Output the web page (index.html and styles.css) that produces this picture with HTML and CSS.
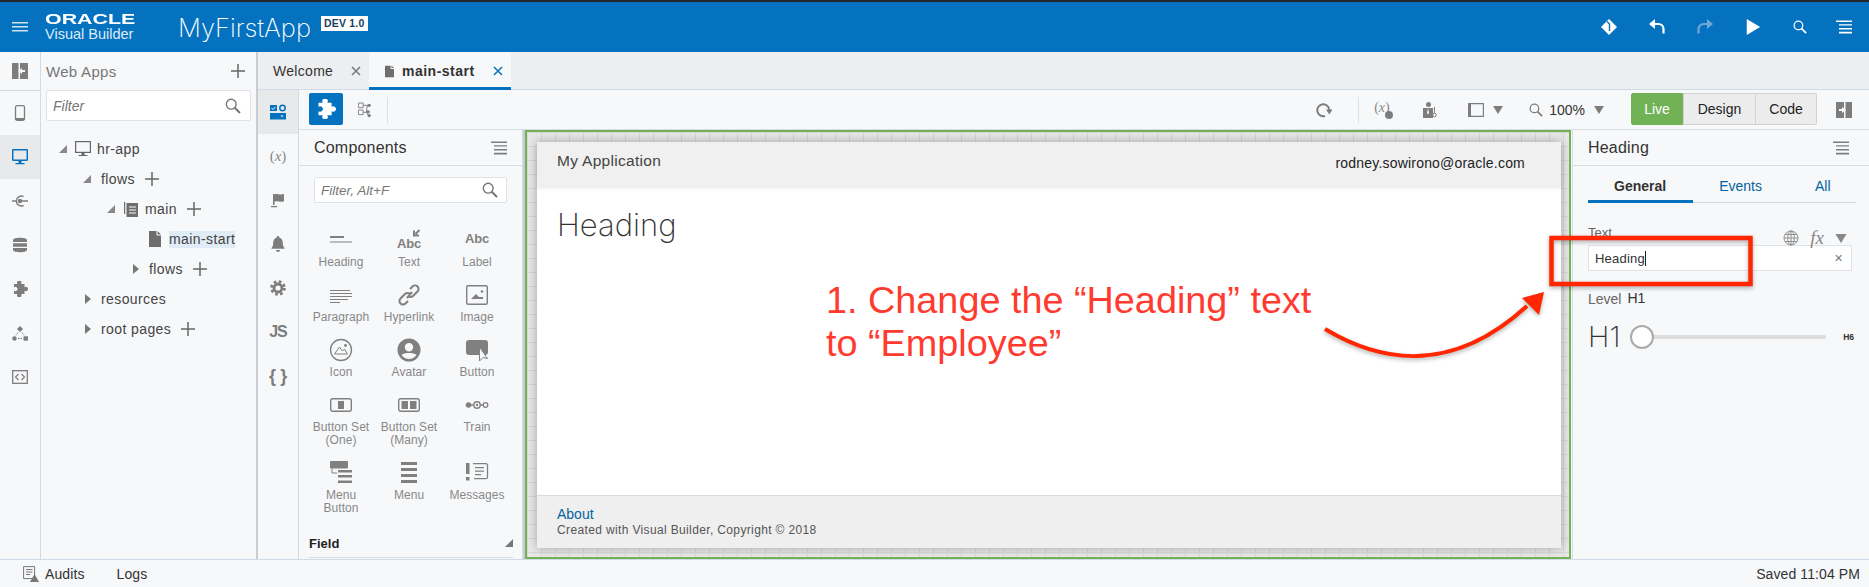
FILE: index.html
```html
<!DOCTYPE html>
<html lang="en">
<head>
    <meta charset="UTF-8">
    <title>MyFirstApp - Visual Builder</title>
    <link rel="stylesheet" href="styles.css">
</head>
<body>
<svg class="defs" width="0" height="0">
    <symbol id="plus" viewBox="0 0 14 14"><path d="M7 0v14M0 7h14" fill="none" stroke="currentColor" stroke-width="1.5"/></symbol>
    <symbol id="search" viewBox="0 0 16 16"><circle cx="6.2" cy="6.2" r="4.9" fill="none" stroke="currentColor" stroke-width="1.4"/><path d="M9.8 9.8l5.2 5.2" stroke="currentColor" stroke-width="2"/></symbol>
    <symbol id="lines" viewBox="0 0 16 14"><path d="M0 .5h16v1.4H0zM3 4.2h13v1.4H3zM3 8h13v1.4H3zM3 11.8h13v1.6H3z" fill="currentColor"/></symbol>
    <symbol id="puzzle" viewBox="0 0 16 16"><path d="M2 3h3.500a2.200 2.200 0 1 1 3.500 0h3.500v3.200a2.200 2.200 0 1 1 0 3.600V13H9a2.200 2.200 0 1 1-3.500 0H2V9.800a2.200 2.200 0 1 0 0-3.600z" fill="currentColor"/></symbol>
    <symbol id="file" viewBox="0 0 12 16"><path d="M0 0h7.5v4.5H12V16H0zM8.6 0L12 3.4H8.6z" fill="currentColor"/></symbol>
    <symbol id="down" viewBox="0 0 10 8"><path d="M0 0h10L5 8z" fill="currentColor"/></symbol>
</svg>

<header class="topbar">
    <svg class="hamburger" viewBox="0 0 16 10"><path d="M0 0h16v1.5H0zM0 4h16v1.5H0zM0 8h16v1.5H0z" fill="currentColor"/></svg>
    <div class="brand">
        <div class="brand-oracle">ORACLE</div>
        <div class="brand-product">Visual Builder</div>
    </div>
    <div class="app-name">MyFirstApp</div>
    <div class="app-badge">DEV 1.0</div>
    <div class="top-actions">
        <svg viewBox="0 0 16 16"><path d="M8 0l8 8-8 8-8-8z" fill="currentColor"/><path d="M6 2.5l2.5 2.5v7" fill="none" stroke="#0572c0" stroke-width="1.4"/></svg>
        <svg viewBox="0 0 16 16"><path d="M0 5l6-5v10z" fill="currentColor"/><path d="M5 5h4.500a5 5 0 0 1 5 5v4.500" fill="none" stroke="currentColor" stroke-width="2.200"/></svg>
        <svg class="dim" viewBox="0 0 16 16"><path d="M16 5l-6-5v10z" fill="currentColor"/><path d="M11 5H6.500a5 5 0 0 0-5 5v4.500" fill="none" stroke="currentColor" stroke-width="2.200"/></svg>
        <svg viewBox="0 0 16 18"><path d="M1 0l15 9-15 9z" fill="currentColor"/></svg>
        <svg class="small" viewBox="0 0 16 16"><use href="#search"/></svg>
        <svg viewBox="0 0 16 14"><use href="#lines"/></svg>
    </div>
</header>

<main class="workspace">
    <nav class="rail">
        <div class="rail-top">
            <svg viewBox="0 0 16 16"><path d="M0 0h6.500v16H0zM8 0h8v16H8z" fill="currentColor"/><path d="M6 8l4-3v2h3v2h-3v2z" fill="#f7f8fa"/></svg>
        </div>
        <div class="rail-item"><svg viewBox="0 0 16 16"><rect x="3.500" y=".7" width="9" height="14.600" rx="1.500" fill="none" stroke="currentColor" stroke-width="1.300"/><path d="M3.500 13h9v2h-9z" fill="currentColor"/></svg></div>
        <div class="rail-item active"><svg viewBox="0 0 16 16"><rect x=".7" y=".7" width="14.600" height="10.600" rx=".8" fill="none" stroke="currentColor" stroke-width="1.500"/><path d="M6.500 11.500h3V14h-3zM3.500 14h9v1.300h-9z" fill="currentColor"/></svg></div>
        <div class="rail-item"><svg viewBox="0 0 16 16"><path d="M11.500 3.500a5 5 0 1 0 0 9M0 8h5M8 8h8" fill="none" stroke="currentColor" stroke-width="1.500"/><circle cx="8" cy="8" r="2.200" fill="currentColor"/></svg></div>
        <div class="rail-item"><svg viewBox="0 0 16 16"><path d="M1 3c0-3 14-3 14 0v2H1zM1 6.200h14v3.600H1zM1 11h14v2c0 3-14 3-14 0z" fill="currentColor"/></svg></div>
        <div class="rail-item"><svg viewBox="0 0 16 16"><use href="#puzzle"/></svg></div>
        <div class="rail-item"><svg viewBox="0 0 16 16"><path d="M8 1l3 3-3 3-3-3z" fill="currentColor"/><circle cx="2.500" cy="13.500" r="2.200" fill="currentColor"/><rect x="11.500" y="11.300" width="4.500" height="4.500" rx="1" fill="currentColor"/><path d="M6 7.500l-2 3M10 7.500l2 3M6 13.500h4" stroke="currentColor" stroke-dasharray="1.500 1.200"/></svg></div>
        <div class="rail-item"><svg viewBox="0 0 16 16"><rect x=".7" y="1.700" width="14.600" height="12.600" fill="none" stroke="currentColor" stroke-width="1.300"/><path d="M6.500 5L3.500 8l3 3M9.500 5l3 3-3 3" fill="none" stroke="currentColor" stroke-width="1.200"/></svg></div>
    </nav>

    <aside class="apps">
        <div class="apps-head">
            <span>Web Apps</span>
            <svg class="plus" viewBox="0 0 14 14"><use href="#plus"/></svg>
        </div>
        <div class="filter apps-filter">
            <span>Filter</span>
            <svg viewBox="0 0 16 16"><use href="#search"/></svg>
        </div>
        <div class="tree">
            <div class="row l-app">
                <i class="open"></i>
                <svg class="t-desktop" viewBox="0 0 16 16"><rect x=".6" y=".6" width="14.800" height="10.800" fill="none" stroke="currentColor" stroke-width="1.200"/><path d="M6.500 11.500h3V14h-3zM3.500 14h9v1h-9z" fill="currentColor"/></svg>
                <span class="t-app">hr-app</span>
            </div>
            <div class="row l-flows">
                <i class="open"></i><span class="t-gap">flows</span>
                <svg class="plus" viewBox="0 0 14 14"><use href="#plus"/></svg>
            </div>
            <div class="row l-main">
                <i class="open"></i>
                <svg class="t-pages" viewBox="0 0 14 15"><path d="M.6 0v12" stroke="currentColor" stroke-width="1.200"/><path d="M2.500 1h11.500v14H2.500z" fill="currentColor"/><path d="M5 5h7M5 8h7M5 11h7" stroke="#f7f8fa"/></svg>
                <span class="t-main">main</span>
                <svg class="plus" viewBox="0 0 14 14"><use href="#plus"/></svg>
            </div>
            <div class="row l-page">
                <svg class="t-file" viewBox="0 0 12 16"><use href="#file"/></svg>
                <span class="selected">main-start</span>
            </div>
            <div class="row l-subflows">
                <i class="shut"></i><span class="t-gap">flows</span>
                <svg class="plus" viewBox="0 0 14 14"><use href="#plus"/></svg>
            </div>
            <div class="row l-root">
                <i class="shut"></i><span class="t-gap">resources</span>
            </div>
            <div class="row l-root">
                <i class="shut"></i><span class="t-gap">root pages</span>
                <svg class="plus" viewBox="0 0 14 14"><use href="#plus"/></svg>
            </div>
        </div>
    </aside>

    <div class="splitter"></div>

    <section class="editor">
        <div class="tabs">
            <div class="tab">
                <span>Welcome</span>
                <svg viewBox="0 0 10 10"><path d="M1 1l8 8M9 1l-8 8" stroke="currentColor" stroke-width="1.500"/></svg>
            </div>
            <div class="tab current">
                <svg class="tab-file" viewBox="0 0 12 16"><use href="#file"/></svg>
                <span>main-start</span>
                <svg viewBox="0 0 10 10"><path d="M1 1l8 8M9 1l-8 8" stroke="currentColor" stroke-width="1.500"/></svg>
            </div>
        </div>
        <div class="editor-body">
            <nav class="rail-two">
                <div class="rail-two-item active">
                    <svg viewBox="0 0 16 16"><path d="M0 1h7v6H0z" fill="currentColor"/><path d="M1.500 4l1.500 1.500L5.500 3" fill="none" stroke="#fff" stroke-width="1"/><circle cx="12.500" cy="4" r="2.700" fill="none" stroke="currentColor" stroke-width="1.500"/><path d="M0 9h16v6.500H0z" fill="currentColor"/><path d="M10.500 11.500h3L12 13.300z" fill="#fff"/></svg>
                </div>
                <div class="rail-two-item"><span class="vars">(<em>x</em>)</span></div>
                <div class="rail-two-item"><svg viewBox="0 0 16 16"><path d="M3 2h1.500v11H3zM1 14h6v1.300H1zM4.500 2.500c3-1.500 4.500 1 8.500-.5l1 .2v7c-4 1.500-6-.8-9.500.5z" fill="currentColor"/></svg></div>
                <div class="rail-two-item"><svg viewBox="0 0 16 16"><path d="M8 0a1.200 1.200 0 0 1 1.200 1.400C11.500 2 12.800 4 12.800 7c0 2.500.6 3.800 1.700 5v.8H1.500V12c1.100-1.200 1.700-2.500 1.700-5 0-3 1.300-5 3.600-5.600A1.200 1.200 0 0 1 8 0zM6 14h4a2 2 0 0 1-4 0z" fill="currentColor"/></svg></div>
                <div class="rail-two-item"><svg viewBox="0 0 16 16"><circle cx="8" cy="8" r="4" fill="none" stroke="currentColor" stroke-width="2.800"/><circle cx="8" cy="8" r="6.500" fill="none" stroke="currentColor" stroke-width="2.600" stroke-dasharray="2.700 2.400"/></svg></div>
                <div class="rail-two-item"><span class="js">JS</span></div>
                <div class="rail-two-item"><span class="braces">{ }</span></div>
            </nav>
            <div class="editor-main">
                <div class="toolbar">
                    <div class="tool-blue"><svg viewBox="0 0 16 16"><use href="#puzzle"/></svg></div>
                    <svg class="tool-flow" viewBox="0 0 14 16"><path d="M.5.500h5v5h-5zM.5 8h5v5h-5z" fill="none" stroke="currentColor"/><path d="M5.500 3H12M5.500 10.500H9l1-7M9 10.500l2 3" fill="none" stroke="currentColor"/><circle cx="12" cy="3" r="1.800" fill="currentColor"/><circle cx="11" cy="10" r="1.800" fill="currentColor"/><circle cx="12" cy="14" r="1.800" fill="currentColor"/></svg>
                    <div class="tool-sep"></div>
                    <svg class="t-refresh" viewBox="0 0 16 16"><path d="M9 14A6 6 0 1 1 13.300 8" fill="none" stroke="currentColor" stroke-width="2"/><path d="M10 7.500h6.500L13.300 12.500z" fill="currentColor"/></svg>
                    <div class="tool-sep t-sep"></div>
                    <div class="t-vars"><span class="vars small">(<em>x</em>)</span><i></i></div>
                    <svg class="t-person" viewBox="0 0 14 16"><circle cx="5.500" cy="2.500" r="2.500" fill="currentColor"/><path d="M0 6h10v10H0z" fill="currentColor"/><path d="M5 6l1 5-1 1.500L4 11z" fill="#f7f8fa"/><circle cx="11.500" cy="13" r="1.800" fill="#f7f8fa" stroke="currentColor"/><path d="M11.500 5v6" stroke="currentColor"/></svg>
                    <svg class="t-frame" viewBox="0 0 16 14"><path d="M.6.600h14.800v12.800H.6z" fill="none" stroke="currentColor" stroke-width="1.200"/><path d="M0 0h3v14H0z" fill="currentColor"/></svg>
                    <svg class="t-down" viewBox="0 0 10 8"><use href="#down"/></svg>
                    <svg class="t-zoom" viewBox="0 0 16 16"><use href="#search"/></svg>
                    <span class="t-percent">100%</span>
                    <svg class="t-down" viewBox="0 0 10 8"><use href="#down"/></svg>
                    <div class="modes">
                        <div class="mode live">Live</div>
                        <div class="mode design">Design</div>
                        <div class="mode code">Code</div>
                    </div>
                    <svg class="t-panel" viewBox="0 0 16 16"><path d="M9.500 0H16v16H9.500zM0 0h8v16H0z" fill="currentColor"/><path d="M10 8L6 5v2H3v2h3v2z" fill="#f7f8fa"/></svg>
                </div>
                <div class="editor-panes">
                    <aside class="components">
                        <div class="pane-head">
                            <span>Components</span>
                            <svg viewBox="0 0 16 14"><use href="#lines"/></svg>
                        </div>
                        <div class="filter comp-filter">
                            <span>Filter, Alt+F</span>
                            <svg viewBox="0 0 16 16"><use href="#search"/></svg>
                        </div>
                        <div class="palette">
                            <div class="comp">
                                <svg viewBox="0 0 24 24"><path d="M1 8h14v2H1zM1 13.500h22v1H1z"/></svg>
                                <div>Heading</div>
                            </div>
                            <div class="comp">
                                <svg viewBox="0 0 24 24"><text class="abc" x="0" y="20">Abc</text><path d="M22.500 2l-4 4M17 2.500V7.500h5" fill="none" stroke="currentColor" stroke-width="2"/></svg>
                                <div>Text</div>
                            </div>
                            <div class="comp">
                                <svg viewBox="0 0 24 24"><text class="abc" x="0" y="15">Abc</text></svg>
                                <div>Label</div>
                            </div>
                            <div class="comp">
                                <svg viewBox="0 0 24 24"><path d="M1 7h20v1H1zM1 10h22v1H1zM1 13h22v1H1zM1 16h18v1H1zM1 19h10v1H1z"/></svg>
                                <div>Paragraph</div>
                            </div>
                            <div class="comp">
                                <svg viewBox="0 0 24 24"><path d="M10 15l5-6M13 6l2.500-2.500a3.500 3.500 0 0 1 5 5L16 13a3.500 3.500 0 0 1-5 0M11 18l-2.500 2.500a3.500 3.500 0 0 1-5-5L8 11a3.500 3.500 0 0 1 5 0" fill="none" stroke="currentColor" stroke-width="2"/></svg>
                                <div>Hyperlink</div>
                            </div>
                            <div class="comp">
                                <svg viewBox="0 0 24 24"><rect x="1.700" y="2.700" width="20.600" height="18.600" rx="1.500" fill="none" stroke="currentColor" stroke-width="1.400"/><path d="M6 16l5-5 3 3H18v2z"/><circle cx="17" cy="8.500" r="1.300"/></svg>
                                <div>Image</div>
                            </div>
                            <div class="comp">
                                <svg viewBox="0 0 24 24"><circle cx="12" cy="12" r="10.500" fill="none" stroke="currentColor" stroke-width="1.300"/><path d="M5.500 16l5-7 3 4 2-2 3 5z" fill="none" stroke="currentColor"/><circle cx="16.500" cy="7.500" r="1.400"/></svg>
                                <div>Icon</div>
                            </div>
                            <div class="comp">
                                <svg viewBox="0 0 24 24"><path fill-rule="evenodd" d="M12 .5a11.500 11.500 0 1 1 0 23 11.500 11.500 0 0 1 0-23zM12 5a4.200 4.200 0 1 0 0 8.400A4.200 4.200 0 0 0 12 5zM4.500 17c2 2.800 4.500 4 7.500 4s5.500-1.200 7.500-4c-1.500-1.500-4.500-2-7.500-2s-6 .5-7.500 2z"/></svg>
                                <div>Avatar</div>
                            </div>
                            <div class="comp">
                                <svg viewBox="0 0 24 24"><rect x="1" y="2" width="22" height="15" rx="3"/><path d="M14.500 9v14l3.500-3.500 4.500 1-8-11.500z" fill="#f7f8fa" stroke="currentColor"/></svg>
                                <div>Button</div>
                            </div>
                            <div class="comp">
                                <svg viewBox="0 0 24 24"><rect x="1.700" y="5.700" width="20.600" height="12.600" rx="2" fill="none" stroke="currentColor" stroke-width="1.400"/><path d="M9 8h6v8H9z"/></svg>
                                <div>Button Set<br>(One)</div>
                            </div>
                            <div class="comp">
                                <svg viewBox="0 0 24 24"><rect x="1.700" y="5.700" width="20.600" height="12.600" rx="2" fill="none" stroke="currentColor" stroke-width="1.400"/><path d="M4.500 8h6.500v8H4.500zM13 8h6.500v8H13z"/></svg>
                                <div>Button Set<br>(Many)</div>
                            </div>
                            <div class="comp">
                                <svg viewBox="0 0 24 24"><circle cx="3.500" cy="12" r="2.800"/><circle cx="12" cy="12" r="3.200" fill="none" stroke="currentColor" stroke-width="1.400"/><circle cx="12" cy="12" r="1.200"/><circle cx="20.500" cy="12" r="2.300" fill="none" stroke="currentColor" stroke-width="1.300"/><path d="M6 12h2.500M15 12h3" stroke="currentColor" stroke-width="1.300"/></svg>
                                <div>Train</div>
                            </div>
                            <div class="comp">
                                <svg viewBox="0 0 24 24"><rect x="1" y="0" width="18" height="7.500" rx="1"/><path d="M3 7.500v4.500h5" fill="none" stroke="currentColor"/><path d="M9 9h14v2.500H9zM9 14h14v2.500H9zM9 19.500h14V22H9z"/></svg>
                                <div>Menu<br>Button</div>
                            </div>
                            <div class="comp">
                                <svg viewBox="0 0 24 24"><path d="M4 1h16v3H4zM4 7h16v3H4zM4 13h16v3H4zM4 19h16v3H4z"/></svg>
                                <div>Menu</div>
                            </div>
                            <div class="comp">
                                <svg viewBox="0 0 24 24"><path d="M1 2h3.500v11H1zM1 16h3.500v3.500H1z"/><path d="M8 2.700h13a1.500 1.500 0 0 1 1.500 1.500v12a1.500 1.500 0 0 1-1.500 1.500H9" fill="none" stroke="currentColor" stroke-width="1.300"/><path d="M10 6h9v1.300h-9zM10 9.500h9v1.300h-9zM10 13h6v1.300h-6z"/></svg>
                                <div>Messages</div>
                            </div>
                        </div>
                        <div class="field-head">
                            <span>Field</span>
                            <i></i>
                        </div>
                    </aside>
                    <div class="splitter thin"></div>
                    <div class="canvas">
                        <div class="page">
                            <div class="page-head">
                                <span class="page-title">My Application</span>
                                <span class="page-user">rodney.sowirono@oracle.com</span>
                            </div>
                            <div class="page-body">
                                <h1>Heading</h1>
                            </div>
                            <div class="page-foot">
                                <a>About</a>
                                <p>Created with Visual Builder, Copyright © 2018</p>
                            </div>
                        </div>
                    </div>
                    <aside class="props">
                        <div class="pane-head props-head">
                            <span>Heading</span>
                            <svg viewBox="0 0 16 14"><use href="#lines"/></svg>
                        </div>
                        <div class="props-tabs">
                            <span class="on">General</span>
                            <span>Events</span>
                            <span>All</span>
                        </div>
                        <div class="prop-label">
                            <span>Text</span>
                            <div class="prop-tools">
                                <svg viewBox="0 0 16 16"><g fill="none" stroke="currentColor" stroke-width=".9"><circle cx="8" cy="8" r="7"/><ellipse cx="8" cy="8" rx="3.300" ry="7"/><path d="M8 1v14M1 8h14M2 4.500h12M2 11.500h12"/></g></svg>
                                <em>fx</em>
                                <svg class="prop-down" viewBox="0 0 10 8"><use href="#down"/></svg>
                            </div>
                        </div>
                        <div class="prop-input">
                            <span class="value">Heading</span>
                            <span class="clear">×</span>
                        </div>
                        <div class="prop-level">
                            <span>Level</span><b>H1</b>
                        </div>
                        <div class="slider">
                            <span class="slider-big">H1</span>
                            <div class="slider-track"><i></i></div>
                            <span class="slider-end">H6</span>
                        </div>
                    </aside>
                </div>
            </div>
        </div>
    </section>
</main>

<footer class="statusbar">
    <svg viewBox="0 0 16 16"><path d="M.6.600h11v12H.6z" fill="none" stroke="currentColor"/><path d="M3 3.500h6.500M3 6h6.500M3 8.500h4" stroke="currentColor"/><path d="M11.500 8l4.500 8H7z" fill="currentColor"/></svg>
    <span class="audits">Audits</span>
    <span class="logs">Logs</span>
    <span class="saved">Saved 11:04 PM</span>
</footer>

<!-- callout drawn on top of the screenshot -->
<div class="callout">1. Change the “Heading” text<br>to “Employee”</div>
<svg class="markup" viewBox="0 0 1869 587">
    <rect x="1551.500" y="238" width="199" height="46" fill="none" stroke="#ff2600" stroke-width="4.500"/>
    <path d="M1325 329C1385 365 1455 372 1527 306" fill="none" stroke="#ff2600" stroke-width="4"/>
    <path d="M1544 292L1522 298 1539 315z" fill="#ff2600"/>
</svg>
</body>
</html>
```

FILE: styles.css
```css
body {
    margin: 0;
    width: 1869px;
    height: 587px;
    overflow: hidden;
    position: relative;
    display: flex;
    flex-direction: column;
    font-family: "Liberation Sans", Arial, sans-serif;
    background: #f7f8fa;
    color: #333;
}

.defs {
    position: absolute;
}

svg {
    display: block;
    flex: none;
}

/* top bar */
.topbar {
    height: 50px;
    border-top: 2px solid #23262b;
    background: #0572c0;
    color: #fff;
    display: flex;
    align-items: center;
    flex: none;
}

.hamburger {
    width: 16px;
    height: 10px;
    margin-left: 12px;
    color: #cfe3f3;
}

.brand {
    margin-left: 17px;
    width: 133px;
}

.brand-oracle {
    font-size: 15.500px;
    font-weight: bold;
    line-height: 14px;
    transform: scaleX(1.38);
    transform-origin: left;
}

.brand-product {
    font-size: 14.500px;
    line-height: 17px;
    color: #dcebf7;
}

.app-name {
    font-family: Inter, sans-serif;
    font-weight: 200;
    font-size: 25.500px;
}

.app-badge {
    margin: 0 0 8px 10px;
    background: #fff;
    color: #1d3f5e;
    font-size: 10.500px;
    font-weight: bold;
    letter-spacing: .2px;
    padding: 1px 3px;
    line-height: 13px;
}

.top-actions {
    margin-left: auto;
    display: flex;
    align-items: center;
    gap: 32px;
    padding-right: 17px;
}

.top-actions svg {
    width: 16px;
    height: 16px;
}

.top-actions .dim {
    color: #6fa9d6;
}

.top-actions .small {
    width: 14px;
    height: 14px;
    margin-right: -3px;
}

/* left rail */
.workspace {
    flex: 1;
    display: flex;
    min-height: 0;
}

.rail {
    width: 40px;
    border-right: 1px solid #cfdbe6;
    flex: none;
    color: #7d7d7d;
}

.rail-top {
    height: 38px;
    border-bottom: 1px solid #cfdbe6;
    display: flex;
    align-items: center;
    justify-content: center;
}

.rail-item {
    height: 44px;
    display: flex;
    align-items: center;
    justify-content: center;
}

.rail-top svg, .rail-item svg {
    width: 16px;
    height: 16px;
}

.rail-item.active {
    background: #e8e9eb;
    color: #0572c0;
}

/* web apps panel */
.apps {
    width: 215px;
    flex: none;
}

.apps-head {
    height: 38px;
    display: flex;
    align-items: center;
    justify-content: space-between;
    padding: 0 11px 0 5px;
    font-size: 15px;
    letter-spacing: .3px;
    color: #777;
}

.plus {
    width: 14px;
    height: 14px;
    color: #666;
}

.filter {
    display: flex;
    align-items: center;
    justify-content: space-between;
    background: #fff;
    border: 1px solid #dfe3e8;
    border-radius: 2px;
    font-size: 14px;
    font-style: italic;
    color: #777;
    padding: 0 9px 0 6px;
    box-sizing: border-box;
}

.filter svg {
    width: 16px;
    height: 16px;
    color: #777;
}

.apps-filter {
    margin-left: 5px;
    width: 205px;
    height: 31px;
}

.tree {
    margin-top: 13px;
    font-size: 14px;
    letter-spacing: .4px;
    color: #444;
}

.row {
    height: 30px;
    display: flex;
    align-items: center;
}

.row .plus {
    margin-left: 10px;
}

.open {
    width: 0;
    height: 0;
    border-style: solid;
    border-width: 0 0 8px 8px;
    border-color: transparent transparent #888;
}

.shut {
    width: 0;
    height: 0;
    border-style: solid;
    border-width: 5.500px 0 5.500px 6px;
    border-color: transparent transparent transparent #777;
}

.l-app { padding-left: 18px; }
.l-flows { padding-left: 42px; }
.l-main { padding-left: 66px; }
.l-page { padding-left: 108px; }
.l-subflows { padding-left: 92px; }
.l-root { padding-left: 44px; }

.t-gap { margin-left: 10px; }
.t-app { margin-left: 6px; }
.t-main { margin-left: 7px; }

.t-desktop {
    width: 16px;
    height: 16px;
    margin-left: 8px;
    color: #666;
}

.t-pages {
    width: 14px;
    height: 15px;
    margin-left: 9px;
    color: #6e6e6e;
}

.t-file {
    width: 12px;
    height: 16px;
    color: #6e6e6e;
}

.selected {
    margin-left: 8px;
    background: #dfebf5;
    line-height: 17px;
}

.splitter {
    width: 2px;
    background: #c8ccd4;
    flex: none;
}

/* editor */
.editor {
    flex: 1;
    min-width: 0;
    display: flex;
    flex-direction: column;
}

.tabs {
    height: 38px;
    flex: none;
    background: #edeef0;
    display: flex;
    box-sizing: border-box;
    border-bottom: 1px solid #cfdbe6;
}

.tab {
    width: 111px;
    height: 38px;
    box-sizing: border-box;
    display: flex;
    align-items: center;
    padding: 0 8px 0 15px;
    font-size: 14px;
    letter-spacing: .3px;
    color: #333;
}

.tab svg {
    width: 10px;
    height: 10px;
    margin-left: auto;
    color: #777;
}

.tab.current {
    width: 142px;
    background: #f7f8fa;
    border-bottom: 3px solid #0572c0;
    font-weight: bold;
    letter-spacing: .5px;
    padding: 3px 8px 0 16px;
}

.tab.current svg {
    color: #0572c0;
}

.tab.current .tab-file {
    width: 9px;
    height: 13px;
    margin: 0 8px 0 0;
    color: #6e6e6e;
}

.editor-body {
    flex: 1;
    display: flex;
    min-height: 0;
}

.rail-two {
    width: 40px;
    border-right: 1px solid #cfdbe6;
    flex: none;
    color: #7d7d7d;
}

.rail-two-item {
    height: 44px;
    display: flex;
    align-items: center;
    justify-content: center;
}

.rail-two-item svg {
    width: 16px;
    height: 16px;
}

.rail-two-item.active {
    background: #e8e9eb;
    color: #0572c0;
}

.vars {
    font-family: "Liberation Serif", serif;
    font-size: 15px;
    color: #888;
}

.vars.small {
    font-size: 14px;
    line-height: 14px;
    display: block;
}

.js {
    font-size: 16px;
    font-weight: bold;
    letter-spacing: -1px;
}

.braces {
    font-size: 18px;
    font-weight: bold;
    letter-spacing: -.3px;
}

.editor-main {
    flex: 1;
    min-width: 0;
    display: flex;
    flex-direction: column;
}

/* toolbar */
.toolbar {
    height: 40px;
    box-sizing: border-box;
    border-bottom: 1px solid #d9dde3;
    display: flex;
    align-items: center;
    flex: none;
    color: #7d7d7d;
    padding-left: 10px;
}

.tool-blue {
    width: 34px;
    height: 32px;
    background: #0572c0;
    border-radius: 2px;
    color: #fff;
    display: flex;
    align-items: center;
    justify-content: center;
    margin-bottom: 2px;
}

.tool-blue svg {
    width: 20px;
    height: 20px;
}

.tool-flow {
    width: 13px;
    height: 16px;
    margin-left: 15px;
}

.tool-sep {
    width: 1px;
    height: 26px;
    background: #dcdfe4;
    margin-left: 16px;
}

.t-refresh {
    width: 16px;
    height: 16px;
    margin-left: auto;
}

.tool-sep.t-sep {
    margin-left: 26px;
}

.t-vars {
    margin: 0 0 4px 15px;
    width: 18px;
    position: relative;
}

.t-vars i {
    position: absolute;
    right: -1px;
    bottom: -4px;
    width: 8px;
    height: 8px;
    border-radius: 50%;
    background: #7d7d7d;
}

.t-person {
    width: 14px;
    height: 16px;
    margin-left: 31px;
}

.t-frame {
    width: 16px;
    height: 14px;
    margin-left: 31px;
}

.t-down {
    width: 10px;
    height: 8px;
    margin-left: 9px;
}

.t-zoom {
    width: 14px;
    height: 14px;
    margin-left: 26px;
}

.t-percent {
    margin-left: 6px;
    font-size: 14px;
    color: #333;
}

.modes {
    margin-left: 27px;
    display: flex;
    height: 32px;
    font-size: 14px;
    color: #222;
    margin-bottom: 2px;
}

.mode {
    display: flex;
    align-items: center;
    justify-content: center;
    background: #ececec;
    border: 1px solid #d2d2d2;
    box-sizing: border-box;
}

.live {
    width: 52px;
    background: #72b257;
    border-color: #72b257;
    color: #fff;
    border-radius: 2px 0 0 2px;
}

.design {
    width: 73px;
}

.code {
    width: 61px;
    border-left: 0;
    border-radius: 0 2px 2px 0;
}

.t-panel {
    width: 16px;
    height: 16px;
    margin: 0 17px 0 19px;
}

.editor-panes {
    flex: 1;
    display: flex;
    min-height: 0;
}

/* components palette */
.components {
    width: 223px;
    flex: none;
    overflow: hidden;
    border-right: 1px solid #d5dde6;
}

.pane-head {
    height: 36px;
    box-sizing: border-box;
    border-bottom: 1px solid #d9dde3;
    display: flex;
    align-items: center;
    justify-content: space-between;
    padding: 0 15px 0 15px;
    font-size: 16px;
    letter-spacing: .2px;
    color: #333;
}

.pane-head svg {
    width: 16px;
    height: 14px;
    color: #7d7d7d;
}

.comp-filter {
    margin: 11px 0 0 15px;
    width: 193px;
    height: 26px;
    font-size: 13.500px;
    padding-right: 8px;
}

.palette {
    margin: 25px 0 0 8px;
    display: grid;
    grid-template-columns: repeat(3, 68px);
    row-gap: 14px;
    font-size: 12px;
    line-height: 13px;
    letter-spacing: .05px;
    color: #888;
    text-align: center;
}

.comp svg {
    width: 24px;
    height: 24px;
    margin: 0 auto 4px;
    fill: #808080;
    color: #808080;
}

.abc {
    font-family: "Liberation Sans", sans-serif;
    font-weight: bold;
    font-size: 13px;
    letter-spacing: -.2px;
}

.field-head {
    margin: 21px 9px 0 10px;
    height: 22px;
    box-sizing: border-box;
    border-bottom: 1px solid #d9dde3;
    display: flex;
    justify-content: space-between;
    font-size: 13px;
    font-weight: bold;
    color: #222;
}

.field-head i {
    width: 0;
    height: 0;
    border-style: solid;
    border-width: 0 0 8px 8px;
    border-color: transparent transparent #777;
    margin-top: 3px;
}

.splitter.thin {
    width: 2px;
}

/* page canvas */
.canvas {
    width: 1046px;
    flex: none;
    box-sizing: border-box;
    border: 2px solid #72b257;
    padding: 10px 8px 9px 10px;
    background-color: #e8e8e8;
    background-image: linear-gradient(#d8d8d8 1px, transparent 1px), linear-gradient(90deg, #d8d8d8 1px, transparent 1px);
    background-size: 14px 14px;
    overflow: hidden;
}

.page {
    height: 100%;
    display: flex;
    flex-direction: column;
    background: #fff;
    box-shadow: 0 0 10px rgba(0, 0, 0, .3);
}

.page-head {
    height: 44px;
    background: #f0f0f0;
    display: flex;
    align-items: center;
    justify-content: space-between;
    padding: 0 36px 0 20px;
    box-shadow: 0 2px 4px rgba(0, 0, 0, .1);
}

.page-title {
    font-size: 15.500px;
    letter-spacing: .3px;
    color: #444;
    margin-bottom: 7px;
}

.page-user {
    font-size: 14px;
    letter-spacing: .2px;
    color: #222;
    margin-bottom: 3px;
}

.page-body {
    flex: 1;
    padding: 0 20px;
}

.page-body h1 {
    margin: 20px 0 0;
    font-family: Inter, sans-serif;
    font-weight: 200;
    font-size: 31px;
    line-height: 38px;
    color: #333;
}

.page-foot {
    height: 53px;
    box-sizing: border-box;
    border-top: 1px solid #dcdcdc;
    background: #efefef;
    padding: 10px 20px 0;
}

.page-foot a {
    display: block;
    font-size: 14px;
    line-height: 16px;
    color: #04639f;
}

.page-foot p {
    margin: 0;
    font-size: 12px;
    line-height: 16px;
    letter-spacing: .36px;
    color: #555;
}

/* property panel */
.props {
    flex: 1;
    min-width: 0;
    margin-left: 1px;
    border-left: 1px solid #d9dde3;
}

.props-head {
    padding: 0 20px 0 15px;
}

.props-tabs {
    margin: 0 13px 0 15px;
    height: 37px;
    box-sizing: border-box;
    border-bottom: 1px solid #cfdbe6;
    display: flex;
    align-items: center;
    padding-top: 3px;
    font-size: 14px;
    color: #04639f;
    position: relative;
}

.props-tabs span {
    margin-left: 53px;
}

.props-tabs span:first-child {
    margin-left: 26px;
}

.props-tabs .on {
    font-weight: bold;
    color: #333;
}

.props-tabs .on::after {
    content: "";
    position: absolute;
    left: 0;
    bottom: -1px;
    width: 105px;
    height: 3px;
    background: #0572c0;
}

.prop-label {
    margin: 22px 22px 0 15px;
    height: 17px;
    display: flex;
    justify-content: space-between;
    align-items: flex-start;
    font-size: 13px;
    color: #666;
}

.prop-tools {
    display: flex;
    align-items: center;
    gap: 11px;
    color: #888;
    margin-top: 2px;
}

.prop-tools svg {
    width: 16px;
    height: 16px;
}

.prop-tools em {
    font-family: "Liberation Serif", serif;
    font-size: 19px;
}

.prop-tools .prop-down {
    width: 12px;
    height: 9px;
}

.prop-input {
    margin: 3px 17px 0 15px;
    height: 26px;
    box-sizing: border-box;
    background: #fff;
    border: 1px solid #dfe3e8;
    display: flex;
    align-items: center;
    justify-content: space-between;
    padding: 0 8px 0 6px;
    font-size: 13px;
    letter-spacing: .2px;
    color: #333;
}

.value {
    border-right: 1px solid #222;
    line-height: 15px;
}

.clear {
    color: #777;
    font-size: 14px;
}

.prop-level {
    margin: 20px 0 0 15px;
    display: flex;
    align-items: center;
    gap: 6px;
    font-size: 14px;
    color: #666;
}

.prop-level b {
    font-weight: 400;
    color: #333;
    margin-top: -3px;
}

.slider {
    margin: 15px 15px 0 15px;
    display: flex;
    align-items: center;
}

.slider-big {
    font-family: Inter, sans-serif;
    font-weight: 200;
    font-size: 29px;
    line-height: 30px;
    color: #333;
}

.slider-track {
    margin-left: 10px;
    flex: 1;
    height: 4px;
    background: #dcdcdc;
    border-radius: 2px;
    position: relative;
}

.slider-track i {
    position: absolute;
    left: 0;
    top: -10px;
    width: 24px;
    height: 24px;
    box-sizing: border-box;
    border: 2px solid #aaa;
    border-radius: 50%;
    background: #fff;
}

.slider-end {
    margin-left: 17px;
    font-size: 8.500px;
    font-weight: bold;
    color: #333;
}

/* status bar */
.statusbar {
    height: 28px;
    flex: none;
    box-sizing: border-box;
    border-top: 1px solid #cfdbe6;
    display: flex;
    align-items: center;
    padding: 0 9px 0 23px;
    font-size: 14px;
    letter-spacing: .1px;
    color: #333;
}

.statusbar svg {
    width: 16px;
    height: 16px;
    color: #777;
}

.audits {
    margin-left: 6px;
}

.logs {
    margin-left: 32px;
}

.saved {
    margin-left: auto;
}

/* markup over the screenshot */
.callout {
    position: absolute;
    left: 826px;
    top: 279px;
    font-size: 37.800px;
    line-height: 43px;
    color: #ff3b30;
}

.markup {
    position: absolute;
    left: 0;
    top: 0;
    width: 1869px;
    height: 587px;
    filter: drop-shadow(0 2px 2px rgba(0, 0, 0, .3));
}
```
